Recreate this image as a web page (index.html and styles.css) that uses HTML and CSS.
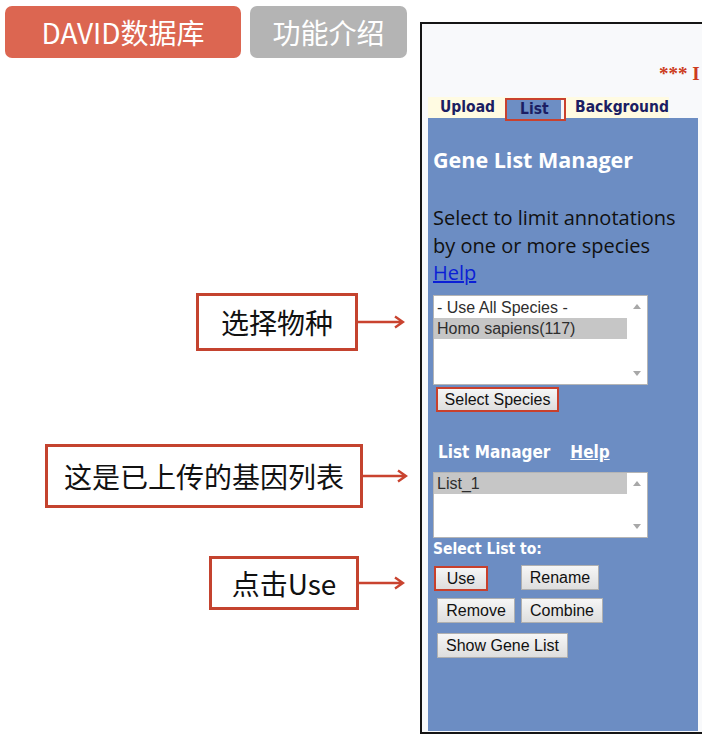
FILE: index.html
```html
<!DOCTYPE html>
<html lang="zh">
<head>
<meta charset="utf-8">
<title>DAVID数据库</title>
<link rel="stylesheet" href="styles.css">
</head>
<body>
<div class="page">
  <div class="left">
    <div class="toptabs">
      <div class="toptab toptab-red">DAVID数据库</div>
      <div class="toptab toptab-gray">功能介绍</div>
    </div>
    <div class="callout c1">
      <div class="cbox">选择物种</div>
      <svg class="arrow" width="47" height="16" viewBox="0 0 47 16"><path d="M0 8H45M37 2.5L45 8L37 13.5" fill="none" stroke="#c9432f" stroke-width="2.4"/></svg>
    </div>
    <div class="callout c2">
      <div class="cbox">这是已上传的基因列表</div>
      <svg class="arrow" width="45" height="16" viewBox="0 0 45 16"><path d="M0 8H43M35 2.5L43 8L35 13.5" fill="none" stroke="#c9432f" stroke-width="2.4"/></svg>
    </div>
    <div class="callout c3">
      <div class="cbox">点击Use</div>
      <svg class="arrow" width="46" height="16" viewBox="0 0 46 16"><path d="M0 8H44M36 2.5L44 8L36 13.5" fill="none" stroke="#c9432f" stroke-width="2.4"/></svg>
    </div>
  </div>
  <div class="panel">
    <div class="notice"><span>*** I</span></div>
    <div class="navrow">
      <span class="nav">Upload</span>
      <span class="nav nav-active">List</span>
      <span class="nav">Background</span>
    </div>
    <div class="blue">
      <div class="title">Gene List Manager</div>
      <p class="desc">Select to limit annotations<br>by one or more species<br><a class="help" href="#">Help</a></p>
      <div class="listbox lb1">
        <div class="items">
          <div class="item">- Use All Species -</div>
          <div class="item sel">Homo sapiens(117)</div>
        </div>
        <div class="sbar"><span class="up"></span><span class="down"></span></div>
      </div>
      <div class="btnrow row-species"><span class="btn hl btn-species">Select Species</span></div>
      <div class="lm-head"><span>List Manager</span><a class="lm-help" href="#">Help</a></div>
      <div class="listbox lb2">
        <div class="items">
          <div class="item sel">List_1</div>
        </div>
        <div class="sbar"><span class="up"></span><span class="down"></span></div>
      </div>
      <div class="selto">Select List to:</div>
      <div class="btnrow row1"><span class="btn hl btn-use">Use</span><span class="btn btn-rename">Rename</span></div>
      <div class="btnrow row2"><span class="btn btn-remove">Remove</span><span class="btn btn-combine">Combine</span></div>
      <div class="btnrow row3"><span class="btn btn-show">Show Gene List</span></div>
    </div>
  </div>
</div>
</body>
</html>
```
FILE: styles.css
```css
html, body {
  margin: 0;
  padding: 0;
  overflow: hidden;
  background: #ffffff;
}
body {
  width: 702px;
  height: 736px;
}
.page {
  display: grid;
  grid-template-columns: 420px 1fr;
  width: 702px;
  height: 736px;
  overflow: hidden;
}
.left {
  display: flex;
  flex-direction: column;
  font-family: "Noto Sans CJK SC", "Noto Sans", sans-serif;
}
.toptabs {
  display: flex;
  gap: 9px;
  margin: 6px 0 0 5px;
}
.toptab {
  height: 52px;
  border-radius: 7px;
  color: #ffffff;
  font-size: 28px;
  line-height: 52px;
  text-align: center;
  box-sizing: border-box;
}
.toptab-red {
  width: 236px;
  background: #dc6651;
}
.toptab-gray {
  width: 157px;
  background: #b4b4b4;
}
.callout {
  display: flex;
  align-items: center;
  justify-content: flex-end;
}
.cbox {
  box-sizing: border-box;
  border: 3px solid #c4432f;
  background: #ffffff;
  color: #111111;
  font-size: 28px;
  display: flex;
  align-items: center;
  justify-content: center;
}
.c1 { margin-top: 235px; padding-right: 15px; }
.c1 .cbox { width: 162px; height: 58px; }
.c2 { margin-top: 93px; padding-right: 12px; }
.c2 .cbox { width: 318px; height: 64px; }
.c3 { margin-top: 48px; padding-right: 15px; }
.c3 .cbox { width: 150px; height: 54px; }
.arrow { display: block; }

.panel {
  margin-top: 22px;
  height: 712px;
  box-sizing: border-box;
  border: 2px solid #151515;
  border-right: none;
  background: #f8f9fb;
  padding-left: 6px;
  display: flex;
  flex-direction: column;
  width: 300px;
}
.notice {
  height: 73px;
  box-sizing: border-box;
  display: flex;
  align-items: flex-end;
  padding: 0 0 13px 231px;
  white-space: nowrap;
}
.notice span {
  font-family: "Liberation Serif", serif;
  font-weight: bold;
  font-size: 19px;
  line-height: 20px;
  color: #cc3b20;
}
.navrow {
  display: flex;
  align-items: flex-start;
  height: 21px;
  width: 241px;
  background: #fffbe2;
  padding-left: 12px;
  box-sizing: border-box;
  font-family: "DejaVu Sans Condensed", "DejaVu Sans", Verdana, sans-serif;
  font-stretch: condensed;
  font-weight: bold;
  font-size: 15.5px;
  color: #1b1e63;
  white-space: nowrap;
}
.nav {
  line-height: 21px;
}
.nav-active {
  position: relative;
  z-index: 1;
  margin: 1px 9px 0 10px;
  width: 61px;
  height: 23px;
  box-sizing: border-box;
  border: 2px solid #c9412e;
  background: #6d8ec4;
  box-shadow: inset -3px 0 0 #f3f5fa;
  padding-left: 13px;
  line-height: 19px;
}
.blue {
  flex: 1;
  width: 270px;
  background: #6c8dc3;
  padding-left: 5px;
  box-sizing: border-box;
  margin-bottom: 1px;
}
.title {
  margin-top: 30px;
  font-family: "Open Sans", sans-serif;
  font-weight: bold;
  font-size: 21.5px;
  line-height: 24px;
  color: #ffffff;
  white-space: nowrap;
}
.desc {
  margin: 32px 0 0 0;
  font-family: "Open Sans", sans-serif;
  font-size: 20px;
  line-height: 27.5px;
  color: #111111;
  white-space: nowrap;
}
.help {
  color: #0b1fd6;
  text-decoration: underline;
}
.listbox {
  margin-top: 8px;
  width: 215px;
  box-sizing: border-box;
  border: 1px solid #b5b5b5;
  background: #ffffff;
  display: flex;
  font-family: "Liberation Sans", Arial, sans-serif;
  font-size: 16px;
  color: #2e2e2e;
}
.lb1 { height: 90px; }
.lb2 { height: 66px; margin-top: 10px; }
.items {
  flex: 1;
  padding-top: 1px;
}
.item {
  height: 21px;
  line-height: 21px;
  padding-left: 3px;
  white-space: nowrap;
}
.lb2 .items { padding-top: 0; }
.item.sel {
  background: #c6c6c6;
}
.sbar {
  width: 20px;
  display: flex;
  flex-direction: column;
  justify-content: space-between;
  align-items: center;
  padding: 8px 0 8px;
}
.up, .down {
  width: 0;
  height: 0;
  border-left: 4px solid transparent;
  border-right: 4px solid transparent;
}
.up { border-bottom: 5px solid #a8a8a8; }
.down { border-top: 5px solid #a8a8a8; }

.btnrow {
  display: flex;
}
.btn {
  box-sizing: border-box;
  height: 25px;
  border: 1px solid #b0b0b0;
  background: linear-gradient(#f6f6f6, #dedede);
  font-family: "Liberation Sans", Arial, sans-serif;
  font-size: 16px;
  line-height: 23px;
  color: #111111;
  text-align: center;
  white-space: nowrap;
}
.btn.hl {
  border: 2px solid #c8402c;
  line-height: 21px;
}
.row-species { margin: 2px 0 0 3px; }
.btn-species { width: 123px; }
.lm-head {
  margin-top: 30px;
  padding-left: 5px;
  display: flex;
  gap: 20px;
  font-family: "DejaVu Sans Condensed", "DejaVu Sans", Verdana, sans-serif;
  font-stretch: condensed;
  font-weight: bold;
  font-size: 17px;
  line-height: 20px;
  color: #ffffff;
  white-space: nowrap;
}
.lm-help {
  color: #ffffff;
  text-decoration: underline;
}
.selto {
  margin-top: 2px;
  font-family: "DejaVu Sans Condensed", "DejaVu Sans", Verdana, sans-serif;
  font-stretch: condensed;
  font-weight: bold;
  font-size: 15.5px;
  line-height: 18px;
  color: #ffffff;
  white-space: nowrap;
}
.row1 { margin: 7px 0 0 1px; gap: 33px; align-items: flex-start; }
.btn-use { width: 54px; margin-top: 1px; }
.btn-rename { width: 78px; }
.row2 { margin: 7px 0 0 4px; gap: 6px; }
.btn-remove { width: 78px; }
.btn-combine { width: 82px; }
.row3 { margin: 10px 0 0 4px; }
.btn-show { width: 131px; }
```
